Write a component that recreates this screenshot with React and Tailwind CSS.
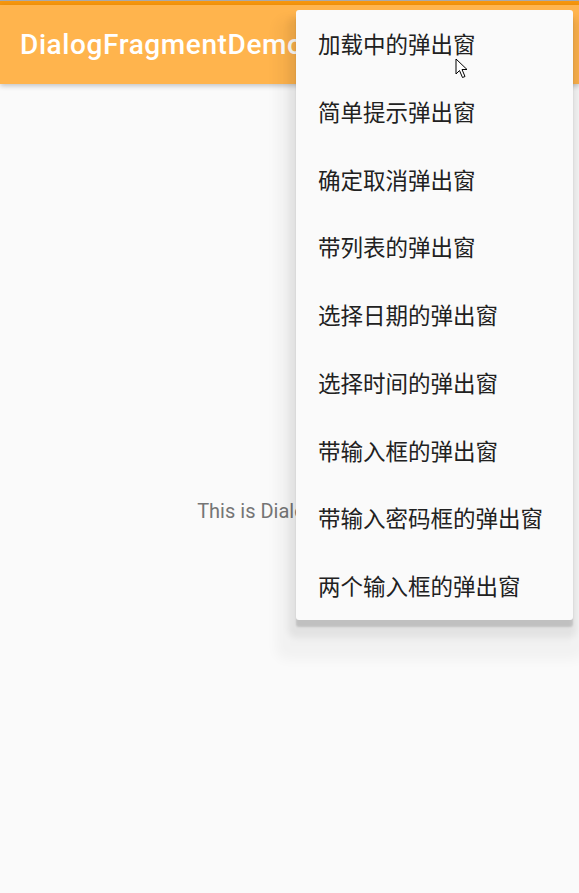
import React from "react";

const items = [
  "加载中的弹出窗",
  "简单提示弹出窗",
  "确定取消弹出窗",
  "带列表的弹出窗",
  "选择日期的弹出窗",
  "选择时间的弹出窗",
  "带输入框的弹出窗",
  "带输入密码框的弹出窗",
  "两个输入框的弹出窗",
];

export default function App() {
  return (
    <div className="relative w-[579px] h-[893px] overflow-hidden bg-[#fafafa] font-['Roboto','Noto_Sans_CJK_SC',sans-serif]">
      <div className="h-[1px] bg-[#a8a8a8]" />
      <div className="h-[4px] bg-[#f7960c]" />
      <div className="h-[79px] bg-[#ffb44d] flex items-center pl-[20px] shadow-[0_2px_5px_rgba(0,0,0,0.22)] relative z-10">
        <span className="text-white text-[28px] font-medium tracking-[0.6px] leading-none whitespace-nowrap">
          DialogFragmentDemo
        </span>
      </div>
      <div className="flex justify-center pt-[413px] pl-[20px]">
        <span className="text-[#757575] text-[20px] leading-[28px] whitespace-nowrap">
          This is DialogFragment
        </span>
      </div>

      <div className="absolute z-20 left-[296px] top-[10px] w-[277px] bg-[#fafafa] rounded-[3px] shadow-[0_7px_2px_0_rgba(0,0,0,0.15),-2px_12px_6px_6px_rgba(0,0,0,0.06),-4px_24px_12px_16px_rgba(0,0,0,0.035)]">
        {items.map((t) => (
          <div
            key={t}
            className="h-[67.75px] flex items-center pl-[22px] text-[22.5px] text-[#212121] font-['Noto_Sans_CJK_SC',sans-serif] whitespace-nowrap"
          >
            {t}
          </div>
        ))}
      </div>

      <svg
        className="absolute z-30 left-[455px] top-[58px]"
        width="14"
        height="21"
        viewBox="0 0 14 21"
      >
        <path
          d="M1 1 L1 16 L4.5 12.5 L7.5 19.5 L10 18.5 L7 11.5 L12 11.5 Z"
          fill="#fff"
          stroke="#000"
          strokeWidth="1"
          strokeLinejoin="miter"
        />
      </svg>
    </div>
  );
}
